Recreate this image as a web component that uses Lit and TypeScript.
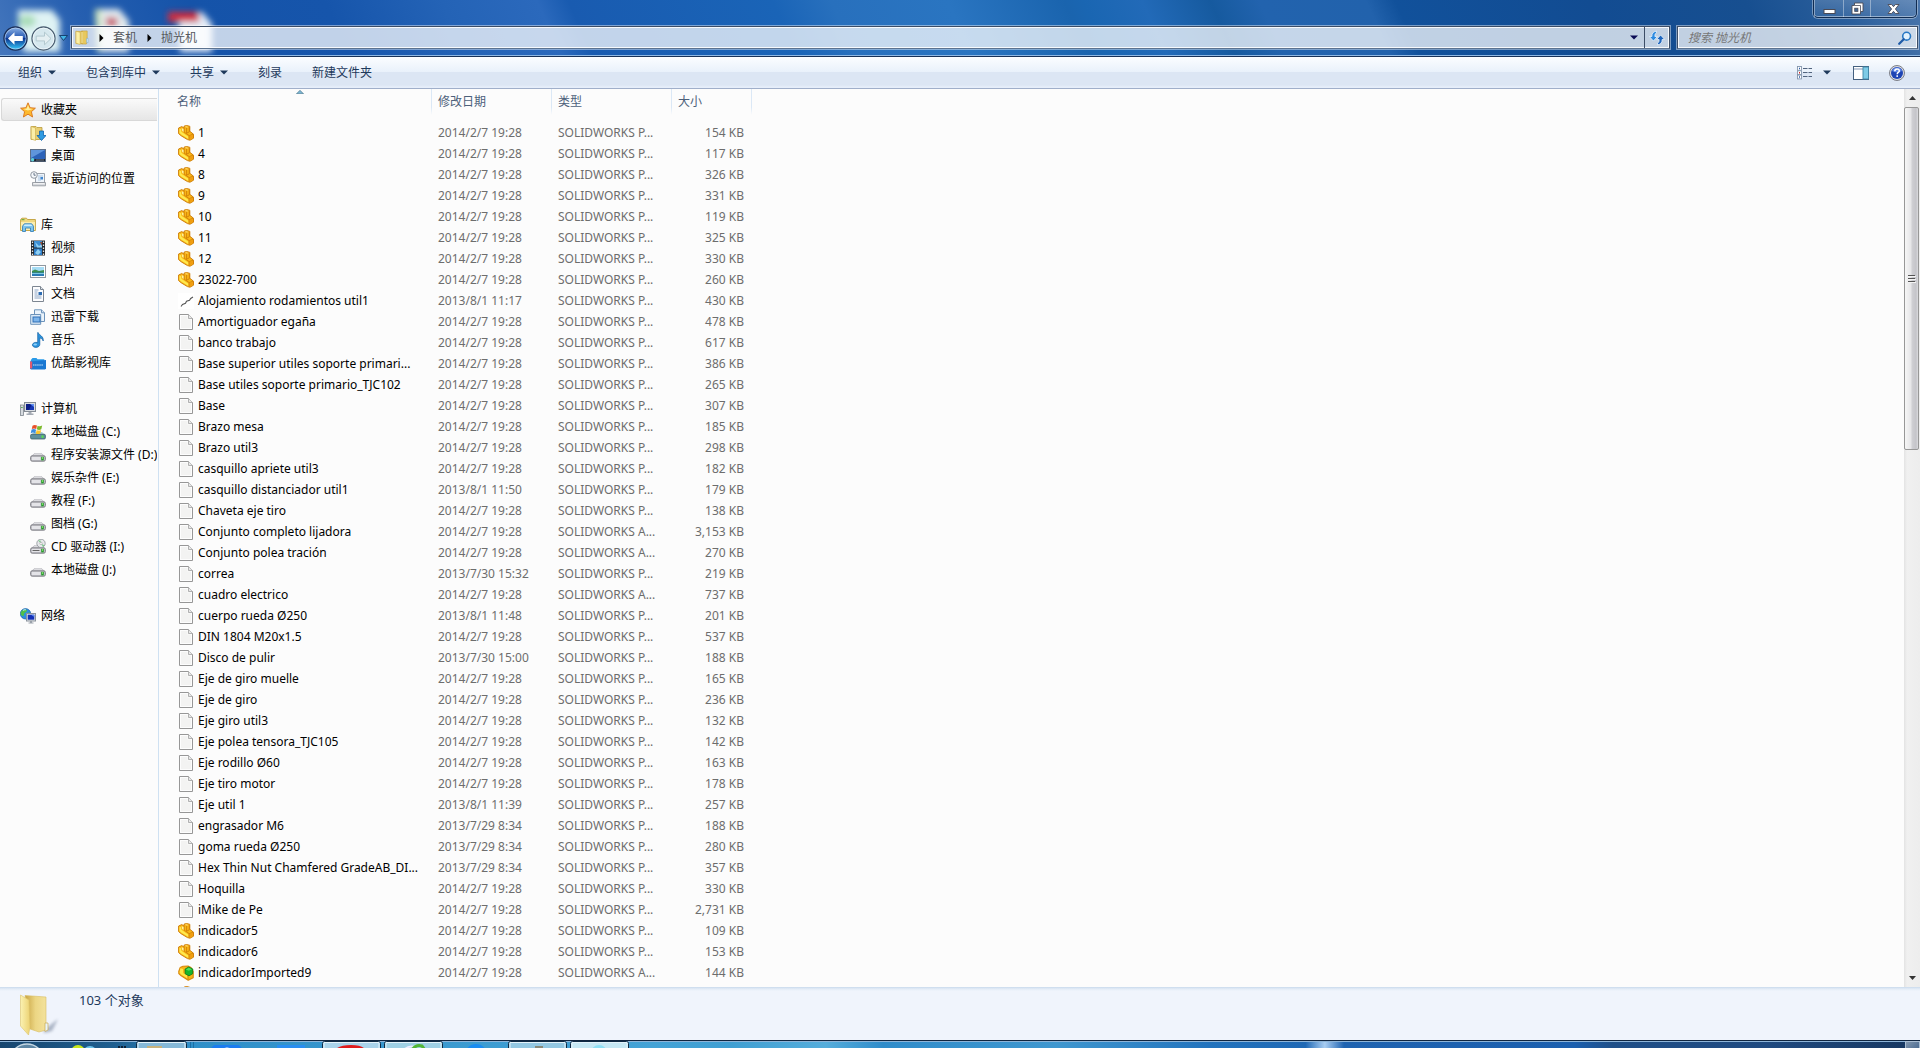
import { LitElement, html, css, svg, nothing } from "lit";
import { customElement } from "lit/decorators.js";

type Row = [kind: string, name: string, date: string, type: string, size: string];

const D = "2014/2/7 19:28";
const P = "SOLIDWORKS P...";
const A = "SOLIDWORKS A...";

const FILES: Row[] = [
  ["part", "1", D, P, "154"],
  ["part", "4", D, P, "117"],
  ["part", "8", D, P, "326"],
  ["part", "9", D, P, "331"],
  ["part", "10", D, P, "119"],
  ["part", "11", D, P, "325"],
  ["part", "12", D, P, "330"],
  ["part", "23022-700", D, P, "260"],
  ["sketch", "Alojamiento rodamientos util1", "2013/8/1 11:17", P, "430"],
  ["page", "Amortiguador egaña", D, P, "478"],
  ["page", "banco trabajo", D, P, "617"],
  ["page", "Base superior utiles soporte primari...", D, P, "386"],
  ["page", "Base utiles soporte primario_TJC102", D, P, "265"],
  ["page", "Base", D, P, "307"],
  ["page", "Brazo mesa", D, P, "185"],
  ["page", "Brazo util3", D, P, "298"],
  ["page", "casquillo apriete util3", D, P, "182"],
  ["page", "casquillo distanciador util1", "2013/8/1 11:50", P, "179"],
  ["page", "Chaveta eje tiro", D, P, "138"],
  ["page", "Conjunto completo lijadora", D, A, "3,153"],
  ["page", "Conjunto polea tración", D, A, "270"],
  ["page", "correa", "2013/7/30 15:32", P, "219"],
  ["page", "cuadro electrico", D, A, "737"],
  ["page", "cuerpo rueda Ø250", "2013/8/1 11:48", P, "201"],
  ["page", "DIN 1804 M20x1.5", D, P, "537"],
  ["page", "Disco de pulir", "2013/7/30 15:00", P, "188"],
  ["page", "Eje de giro muelle", D, P, "165"],
  ["page", "Eje de giro", D, P, "236"],
  ["page", "Eje giro util3", D, P, "132"],
  ["page", "Eje polea tensora_TJC105", D, P, "142"],
  ["page", "Eje rodillo Ø60", D, P, "163"],
  ["page", "Eje tiro motor", D, P, "178"],
  ["page", "Eje util 1", "2013/8/1 11:39", P, "257"],
  ["page", "engrasador M6", "2013/7/29 8:34", P, "188"],
  ["page", "goma rueda Ø250", "2013/7/29 8:34", P, "280"],
  ["page", "Hex Thin Nut Chamfered GradeAB_DI...", "2013/7/29 8:34", P, "357"],
  ["page", "Hoquilla", D, P, "330"],
  ["page", "iMike de Pe", D, P, "2,731"],
  ["part", "indicador5", D, P, "109"],
  ["part", "indicador6", D, P, "153"],
  ["asm", "indicadorImported9", D, A, "144"],
  ["part", "", "", "", ""],
];

const GROUPS: { icon: string; label: string; current?: boolean; items: [string, string][] }[] = [
  { icon: "star", label: "收藏夹", current: true, items: [["download", "下载"], ["desktop", "桌面"], ["recent", "最近访问的位置"]] },
  {
    icon: "library", label: "库",
    items: [["video", "视频"], ["picture", "图片"], ["document", "文档"], ["docs", "迅雷下载"], ["music", "音乐"], ["youku", "优酷影视库"]],
  },
  {
    icon: "computer", label: "计算机",
    items: [["system", "本地磁盘 (C:)"], ["drive", "程序安装源文件 (D:)"], ["drive", "娱乐杂件 (E:)"], ["drive", "教程 (F:)"], ["drive", "图档 (G:)"], ["cd", "CD 驱动器 (I:)"], ["drive", "本地磁盘 (J:)"]],
  },
  { icon: "network", label: "网络", items: [] },
];

const driveBody = svg`
  <path d="M1.5 9.5 4 6.8h8l2.5 2.7z" fill="#e9e9ec" stroke="#a9a9b0" stroke-width=".7"/>
  <rect x=".6" y="8.8" width="14.8" height="5.4" rx="1.6" fill="#c3c3c9" stroke="#77777e" stroke-width=".9"/>
  <rect x="2" y="10" width="8.5" height="3" fill="#e4e4e8"/>
  <rect x="11.2" y="9.8" width="2.6" height="3.6" fill="#2a9a2e"/><rect x="12" y="10.2" width="1" height="1.6" fill="#8af06a"/>`;

const ICONS: Record<string, unknown> = {
  part: svg`
    <path d="M.6 3 3.800 1.600 6 3V1.200L8.500.5l3.300.8v5l3.700 2.900v4L12 15.200l-2.500-.6L3.200 10.800.6 8.600z" fill="#f9b414" stroke="#d0800c" stroke-width="1" stroke-linejoin="round"/>
    <path d="M1.400 3.600 3 4.200l.4 2.600 6.800 4.800.2 2.400-6.600-4L1.400 8z" fill="#ffe94e"/>
    <path d="M3.600 3.200 5.800 4v3L4.200 6z" fill="#fff3a0"/>
    <path d="M6.800 1.800 8.400 1.400l2.200.5-1.800.7z" fill="#fff0a0"/>
    <path d="M8.600 2.800v5.400M11.300 2.200v4.600l-2.700 1.400M6.200 3v4.200l5 3.400M11.300 10.600l3.800-1.400M11.200 10.600v4" fill="none" stroke="#c87808" stroke-width=".8"/>
    <path d="m11.800 11.100 3-1.300v3l-3 1.500z" fill="#f09c10"/>`,
  asm: svg`
    <path d="M.8 6.200 2.200 2.400 5 1.200 10 1l3 1.400 2.200 4v6.400l-5 2.400L3.200 10.800.8 8.600z" fill="#f7b516" stroke="#d98a0e" stroke-width="1.100" stroke-linejoin="round"/>
    <path d="M2.400 3.200 5 4v4l4.200 2.600.8 3.200L3 9.400 1.600 7.600z" fill="#ffe646"/>
    <path d="M10 9v5.500" stroke="#c87808" stroke-width=".8"/>
    <path d="M7 4.200 10.600 2l4.200 2-.2 4.800-3.600 2-3.800-2z" fill="#16b52c" stroke="#087a18" stroke-width=".8"/>
    <path d="m7.800 4.400 3-1.600 3 1.400-3 1.600z" fill="#4fe05c"/>`,
  sketch: svg`<rect width="16" height="16" fill="#fff"/><path d="m3 13.500 1.500-2 3-1.200 1-2 3-1 1.200-1.800L15 4" fill="none" stroke="#555" stroke-width="1.100"/>`,
  page: svg`
    <path d="M1.500.5h9l4 4v11h-13z" fill="#fdfdfd" stroke="#979797"/>
    <path d="M3 2h6.500v3.500H13v8.500H3z" fill="#f3f3f2"/><path d="M10.500.5v4h4" fill="#e8e8e8" stroke="#9f9f9f" stroke-width=".8"/>`,
  star: svg`<path d="m8 .8 2.100 4.900 5.300.5-4 3.500 1.200 5.300L8 12.200 3.400 15l1.200-5.300-4-3.500 5.300-.5z" fill="#fdb92e" stroke="#d9731a" stroke-width=".9" stroke-linejoin="round"/><path d="m8 2.800 1.300 3.600 3.600.5L8 8.500 3.300 6.900l3.500-.5z" fill="#fff0a0"/>`,
  download: svg`
    <path d="M1 1.500h5l1 1h5v12H1z" fill="#e9cf72" stroke="#b99a3c" stroke-width=".8"/><path d="M1.200 1.500 5.500 3v12.500L1.200 14z" fill="#fbeea8" stroke="#c9ab4c" stroke-width=".6"/>
    <path d="M9.500 6h4v4.500H16l-4.500 5-4.500-5h2.500z" fill="#2f9be2" stroke="#0f62ac" stroke-width=".8"/>`,
  desktop: svg`<rect x=".5" y="1.500" width="15" height="12" fill="#2c62b8" stroke="#5e6f86"/><path d="M1 2h14L1 10z" fill="#5f95dc"/><rect x="1" y="11" width="14" height="2.300" fill="#1d2430"/><circle cx="2.600" cy="11.800" r="1.700" fill="#5fd0d8"/><rect x="6" y="11.500" width="8" height="1" fill="#6e7988"/>`,
  recent: svg`
    <path d="M5.500 2.500h9v9h-9z" fill="#eef4fa" stroke="#9aa1aa"/><path d="M8 5h5M8 7h3M8 9h3" stroke="#a9c4e0"/><rect x="10.500" y="6" width="2.500" height="2.500" fill="#3f86d0"/>
    <path d="M2.500 11.500h13v3.300h-13z" fill="#d4d7db" stroke="#8d9299" stroke-width=".8"/><path d="M3.500 12.600h11" stroke="#f4f5f6"/><circle cx="4" cy="4" r="3.300" fill="#f5f8fb" stroke="#9199a3"/><path d="M4 2v2.200h1.700" fill="none" stroke="#46576d" stroke-width=".8"/>`,
  library: svg`
    <path d="M.6 2.500 2 1.200h4.500l1 1.300h7.900v11H.6z" fill="#f0d880" stroke="#c19f3a" stroke-width=".9"/><path d="M1 5h14v8H1z" fill="#faedb0"/><path d="M1.500 2.700h3" stroke="#5aa63a"/>
    <path d="M2.500 14.500V9.200L4.300 6.800h7.400l1.800 2.400v5.300h-3V11h-5v3.500z" fill="#7cc4ee" stroke="#3c83b8" stroke-width=".9"/><path d="m3.600 9 1.200-1.400h6.400L12.400 9z" fill="#c8ecff"/>`,
  video: svg`
    <rect x="1" y=".5" width="14" height="15" fill="#22262b"/><rect x="4" y="1" width="8" height="6.500" fill="#3d8ed2"/><rect x="4" y="8.500" width="8" height="6.500" fill="#2f7fc8"/><path d="m5 2 4 4 3-2v3.500H7zM8 9l3 3-3 3-3-2z" fill="#8fd0f4"/><path d="m10 2 2 0v4z" fill="#9a4a32"/>
    <path d="M2.500 1.500v14M13.500 1.500v14" stroke="#e8e8e8" stroke-width="1.300" stroke-dasharray="1.500 1.500"/>`,
  picture: svg`<rect x=".5" y="2.500" width="15" height="12" fill="#fff" stroke="#8f979f"/><rect x="2" y="4" width="12" height="9" fill="#a6dcf5"/><path d="m2 8 3-1.500L9 8l5-1v3H2z" fill="#3d8f4e"/><path d="M2 9.500h12V13H2z" fill="#2a7ab5"/><path d="M2 10h12v1H2z" fill="#7cc8e0"/>`,
  document: svg`<path d="M2.500.5h8l3 3v12h-11z" fill="#fdfdfe" stroke="#7d8691"/><path d="M10.500.5v3h3" fill="#dfe5ec" stroke="#7d8691"/><path d="M4.500 4h4M4.500 6h3M4.500 8h3M4.500 10h7M4.500 12h7" stroke="#8ea6c4"/><rect x="8.500" y="6" width="3.500" height="3" fill="#2d6cb2"/>`,
  docs: svg`<path d="M4.500.8h7l3 3v8.700h-10z" fill="#eaf3fb" stroke="#6d93ba"/><path d="M11.500.8v3h3" fill="#cfe1f2" stroke="#6d93ba"/><path d="M.7 5.500h10v9.800h-10z" fill="#dcebf8" stroke="#6d93ba"/><rect x="3" y="8" width="7" height="5" fill="#7db4ea" stroke="#2f6fb5"/>`,
  music: svg`<path d="M8.200.6c.6 2.600 5.800 3.400 5 8.400-.6-2-2-2.800-3.400-3v6.400c0 1.800-1.800 3-3.900 3S2.200 14.200 2.400 12.800c.2-1.700 2.600-2.900 5.300-2.300V.6z" fill="#2b93dc" stroke="#1560a4" stroke-width=".7"/><ellipse cx="5.200" cy="12.400" rx="1.800" ry="1" fill="#8fd0fa"/>`,
  youku: svg`<path d="M.8 5 2.500 3h4l1 1.300h6.800V10H.8z" fill="#2a9ae8"/><path d="M0 6.500 16 5v8.500l-1 1H1l-1-1z" fill="#1b78d2"/><path d="M0 6.500h2.200v7H0z" fill="#e25a6e"/><path d="M3 10h10" stroke="#cfe6fb" stroke-dasharray="1.500 .6"/>`,
  computer: svg`
    <rect x=".5" y="4" width="3" height="10.500" fill="#d7dbe0" stroke="#7e858e" stroke-width=".8"/><rect x="1.200" y="6" width="1.400" height="1" fill="#3a9c3a"/><rect x="4.500" y="1.500" width="11" height="9" fill="#d9dde2" stroke="#858c95"/><rect x="6" y="3" width="8" height="6" fill="#1637b4"/><path d="M6 3h6l-3 6H6z" fill="#0b1d86"/><path d="M10 3h4v3z" fill="#5e8cf0"/><path d="M8.500 11h3v1.500h2V14h-7v-1.500h2z" fill="#a5abb4"/>`,
  system: svg`<path d="M.8 11 4 8h8l3.200 3z" fill="#a9cfd8"/><rect x=".6" y="10.300" width="14.800" height="4.700" rx="1.200" fill="#5d8f9c" stroke="#3d5f6b" stroke-width=".8"/><rect x="11.500" y="11.400" width="2" height="2.500" fill="#58e04a"/>
    <path d="M2.500 1.800C4 .6 5.500.8 7 1.600L6.200 5C4.800 4.300 3.300 4.200 1.800 5z" fill="#e8502a"/><path d="M7.600 1.800c1.500.8 3 .7 4.600-.2l-.9 3.700c-1.500.8-3 .8-4.500 0z" fill="#7dba2c"/><path d="M1.600 5.600c1.500-.8 3-.7 4.500.1l-.9 3.500c-1.500-.8-3-.8-4.500 0z" fill="#3b8de0"/><path d="M6.700 5.900c1.500.8 3 .8 4.500 0l-.9 3.600c-1.500.8-3 .7-4.500-.1z" fill="#fbc52c"/>`,
  drive: driveBody,
  cd: svg`${driveBody}<circle cx="11" cy="4.400" r="4.200" fill="#e6e8ea" stroke="#8b9096" stroke-width=".8"/><path d="M11 4.400 8 1.500h2.500zM11 4.400l3.600 2-1.600 1.500z" fill="#7fc98e"/><circle cx="11" cy="4.400" r="1.200" fill="#fff" stroke="#888" stroke-width=".5"/><path d="M2.500 11.500h7" stroke="#666"/>`,
  network: svg`<circle cx="5.500" cy="5.800" r="5.200" fill="#2e8fe0" stroke="#1c5fa8" stroke-width=".7"/><path d="M2 2.600C4 1 6.500 1.200 7 2.500S4 4.500 4 6.500 2 8.500 1 6.800 1 3.800 2 2.600zM8 4l2.300 1v2z" fill="#4fc04a"/><path d="M3 2.500c1-.8 2.500-1 3-.5" stroke="#d5f5ff" fill="none"/><rect x="6.500" y="5.500" width="9" height="7.500" fill="#dfe3e8" stroke="#8a929c"/><rect x="7.700" y="6.700" width="6.600" height="5" fill="#1532b8"/><path d="M11 6.700h3.300V9z" fill="#5b8af0"/><path d="M10 13h2v1.500h1.500v1h-5v-1H10z" fill="#9aa1aa"/>`,
  folder: svg`<path d="M1 1.500h7v13H1zM7 1h6v12l-1 2H7z" fill="#e8c85e" stroke="#c29c36" stroke-width=".6"/><path d="M1 1.200 5.500 2.500v13L1 14z" fill="#fdf0a4" stroke="#ccaa48" stroke-width=".6"/><path d="M7.500 2v12" stroke="#fff3b4"/><path d="M12.300 9h1.700v4.500h-1.700z" fill="#cfeaff" stroke="#7aa7c8" stroke-width=".5"/>`,
};

const icon = (name: string, size = 16) =>
  html`<svg class="icon" width=${size} height=${size} viewBox="0 0 16 16" aria-hidden="true">${ICONS[name]}</svg>`;

const downArrow = html`<svg class="icon" width="8" height="5" viewBox="0 0 8 5" aria-hidden="true"><path d="M0 .5h8L4 4.500z" fill="currentColor"/></svg>`;
const crumbArrow = html`<svg class="icon" width="5" height="8" viewBox="0 0 5 8" aria-hidden="true"><path d="M.5 0v8L4.500 4z" fill="#000"/></svg>`;

@customElement("app-root")
export class AppRoot extends LitElement {
  static styles = css`
    :host {
      display: flex;
      flex-direction: column;
      height: 100vh;
      overflow: hidden;
      background: #fcfcfc;
      font: 12px/20px "Noto Sans", "Noto Sans CJK SC", sans-serif;
      color: #000;
    }
    * { box-sizing: border-box; }
    button, input { font: inherit; color: inherit; border: 0; background: none; padding: 0; margin: 0; }
    a { color: inherit; text-decoration: none; }
    .icon { display: block; flex: none; }

    .glass {
      position: relative;
      flex: none;
      display: flex;
      align-items: flex-start;
      gap: 7px;
      height: 57px;
      padding: 26px 2px 0 3px;
      border-bottom: 1px solid #173158;
      box-shadow: inset 0 -1px #8fb8e4;
      background: linear-gradient(65deg, #4577bd 0%, #265fb0 5%, #1553a9 11%, #1655ab 18%, #2463b6 24%, #2b69bc 28.900%, #195bb0 30.500%, #1a64b7 41%, #2870bd 44%, #2a75c1 50%, #1a64ae 56%, #1a66b2 57%, #226ab8 60%, #165a9f 63.500%, #2263ae 66%, #2262ac 71.500%, #11519b 73%, #124c92 83%, #174f90 91%, #2b5f9c 96%, #4a76ac 100%);
    }
    .behind { position: absolute; left: 0; top: 0; }
    .nav { display: flex; align-items: center; position: relative; gap: 3px; height: 24px; }
    .nav-drop { width: 9px; height: 24px; display: grid; place-items: center; }
    .address, .search {
      position: relative;
      display: flex;
      align-items: center;
      height: 23px;
      border: 1px solid #3c4d66;
      border-bottom-color: #5c7390;
      box-shadow: 0 0 0 1px #ffffff70, inset 0 0 0 1px #ffffffd8;
      background: #ffffffbc;
      color: #55585c;
    }
    .address { flex: 1 1 auto; padding-left: 3px; margin-left: -4px; }
    .address .icon { margin-right: 9px; }
    .crumb { line-height: 20px; margin-right: 10px; }
    .crumb-end { margin-left: auto; display: flex; align-items: center; height: 21px; color: #0a0a55; }
    .crumb-end button { height: 21px; display: grid; place-items: center; }
    .crumb-end .icon { margin: 0; }
    .addr-drop { width: 20px; }
    .refresh { width: 25px; border-left: 1px solid #3c4d66; }
    .search { flex: 0 1 241px; padding: 0 5px 0 10px; }
    .search input { flex: 1; min-width: 0; height: 21px; outline: 0; }
    .search input::placeholder { color: #777; font-style: italic; opacity: 1; }

    .caption {
      position: absolute;
      right: 3px;
      top: 0;
      display: flex;
      height: 18px;
      border: 1px solid #102c52;
      border-top: 0;
      border-radius: 0 0 5px 5px;
      box-shadow: 0 0 0 1px #ffffff60, inset 0 -1px #ffffff70;
      background: linear-gradient(#ffffff28, #ffffff10);
    }
    .caption button { width: 27px; display: grid; place-items: center; border-left: 1px solid #ffffff60; }
    .caption .min { width: 29px; }
    .caption .close { width: 46px; }

    .toolbar {
      flex: none;
      display: flex;
      align-items: center;
      gap: 30px;
      height: 32px;
      padding: 0 15px 0 18px;
      border-bottom: 1px solid #a0afca;
      background: linear-gradient(#fbfdff 0, #e9f1fb 15px, #dce6f4 15px, #dce6f4 28px, #e6eefa 30px);
      color: #1e395b;
    }
    .toolbar button { display: flex; align-items: center; gap: 6px; height: 24px; white-space: nowrap; }
    .tools { margin-left: auto; display: flex; align-items: center; gap: 20px; }
    .tools .view { gap: 10px; margin-right: 2px; }

    .body { flex: 1; min-height: 0; display: flex; }
    .tree { flex: none; width: 159px; padding: 9px 1px 0 1px; border-right: 1px solid #cfe1f2; overflow: hidden; }
    .group { margin-bottom: 23px; }
    .node { display: flex; align-items: center; gap: 5px; height: 23px; padding-left: 29px; line-height: 23px; white-space: nowrap; overflow: hidden; }
    .node.root { padding-left: 19px; }
    .node.current {
      padding-left: 18px;
      border: 1px solid #d8d8d8;
      border-right: 0;
      border-radius: 3px 0 0 3px;
      line-height: 21px;
      background: linear-gradient(#fafafa, #e6e6e6);
    }

    .list { flex: 1; min-width: 0; overflow: hidden; }
    table { border-collapse: collapse; table-layout: fixed; width: 593px; }
    th {
      position: relative;
      height: 26px;
      padding: 0 0 0 6px;
      font-weight: 400;
      text-align: left;
      line-height: 26px;
      color: #4c607a;
      background: linear-gradient(#dbe8f6, #dbe8f6 70%, #fcfcfc) right / 1px 100% no-repeat;
    }
    .sort { position: absolute; left: 50%; top: 1px; }
    thead::after { content: ""; display: block; height: 7px; }
    .c-name { width: 273px; }
    .c-date, .c-type { width: 120px; }
    .c-size { width: 80px; }
    th.c-name { padding-left: 18px; }
    td { height: 21px; padding: 0 0 0 6px; white-space: nowrap; color: #6d6d6d; line-height: 21px; }
    .file { padding-left: 19px; color: #000; }
    .file-in { display: flex; align-items: center; gap: 4px; height: 21px; }
    .size { text-align: right; padding: 0 8px 0 0; }

    .scroll { flex: none; width: 16px; display: flex; flex-direction: column; background: linear-gradient(90deg, #e3e3e3, #f0f0f0 3px, #ededed); }
    .scroll button { flex: none; height: 18px; display: grid; place-items: center; }
    .thumb { flex: 342; margin: 0 1px 0 0; border: 1px solid #979797; border-radius: 2px; background: linear-gradient(90deg, #f6f6f6, #e6e6e8 45%, #cfcfd3 55%, #c4c4c9 85%, #dcdcdf); display: grid; place-items: center; }
    .rest { flex: 520; }

    .details { flex: none; display: flex; align-items: flex-start; gap: 18px; height: 53px; padding: 5px 18px 0; background: linear-gradient(#c9daec, #e3ecf7 2px, #f0f4fc 4px); color: #1e395b; }
    .count { font-size: 13px; line-height: 16px; }

    .taskbar {
      flex: none;
      position: relative;
      display: flex;
      height: 8px;
      overflow: hidden;
      border-top: 1px solid #10253f;
      box-shadow: inset 0 1px #8db4d8;
      background: linear-gradient(90deg, #17466f 0, #1f5f90 6%, #2f8fc8 10%, #44a3d6 34%, #3f9fd2 38%, #55addb 43%, #2f8cca 46%, #3f97cf 55%, #2273bd 63%, #1f68b4 68%, #a8cdf2 69%, #1f63b0 70%, #1b5fae 82%, #1f4f88 84%, #1f4a80 92%, #16365f 100%);
    }
    .task-art { display: block; flex: none; }
    .clock { margin: 4px 21px 0 auto; color: #fff; line-height: 16px; }
    .peek { width: 15px; height: 12px; border: 1px solid #a9bdd2; background: linear-gradient(135deg, #7f95ad, #43648c); }
  `;

  private header() {
    return html`
      <header class="glass">
        <svg class="behind" width="260" height="55" viewBox="0 0 260 55" aria-hidden="true">
          <defs>
            <filter id="soft" x="-20%" y="-20%" width="140%" height="140%"><feGaussianBlur stdDeviation="3"/></filter>
          </defs>
          <g filter="url(#soft)">
            <path d="M18 10h34l8 10v32H24l-6-20z" fill="#dff3f4"/><ellipse cx="27" cy="21" rx="9" ry="6" fill="#a9dcb8"/>
            <path d="M95 9h24l10 12v31H97z" fill="#e4ecef"/><path d="M95 9h6v42h-4z" fill="#c9e2b8"/><path d="M106 17l12 1-2 9h-9z" fill="#c85a6a"/>
            <path d="M178 12h24l10 12v28h-32z" fill="#e6eef8"/><path d="M168 12h31v10h-31z" fill="#d02c3c"/>
          </g>
        </svg>
        <nav class="nav" aria-label="导航">
          <button aria-label="后退">
            <svg class="icon" width="25" height="25" viewBox="0 0 25 25">
              <defs><linearGradient id="bk" x2="0" y2="1"><stop stop-color="#8fb4e6"/><stop offset=".45" stop-color="#2a5cb4"/><stop offset=".5" stop-color="#0b3490"/><stop offset="1" stop-color="#38d0ff"/></linearGradient></defs>
              <circle cx="12.500" cy="12.500" r="11.500" fill="url(#bk)" stroke="#1b2f58" stroke-width="1.400"/><circle cx="12.500" cy="12.500" r="10.500" fill="none" stroke="#bcd6f4" stroke-width=".7"/>
              <path d="m5 12.500 6.500-6.300v3.900h8.300v4.800h-8.300v3.900z" fill="#fff"/>
            </svg>
          </button>
          <button aria-label="前进" disabled>
            <svg class="icon" width="25" height="25" viewBox="0 0 25 25">
              <circle cx="12.500" cy="12.500" r="11.500" fill="#d3e4ec" fill-opacity=".75" stroke="#4c5f72" stroke-width="1.300"/><circle cx="12.500" cy="12.500" r="10.400" fill="none" stroke="#f2fafc" stroke-width=".8"/>
              <path d="m20 12.500-6.500-6.300v3.900H5.200v4.800h8.300v3.900z" fill="#e4eff2" stroke="#aec5cc" stroke-width=".9"/>
            </svg>
          </button>
          <button class="nav-drop" aria-label="最近的页面"><svg class="icon" width="9" height="6" viewBox="0 0 9 6"><path d="M.5.500h8l-4 5z" fill="#43b4e6" stroke="#123a66" stroke-width=".9"/></svg></button>
        </nav>
        <div class="address">
          ${icon("folder", 15)}${crumbArrow}
          <button class="crumb">套机</button>${crumbArrow}
          <button class="crumb">抛光机</button>
          <div class="crumb-end">
            <button class="addr-drop" aria-label="以前的位置">${downArrow}</button>
            <button class="refresh" aria-label="刷新">
              <svg class="icon" width="16" height="16" viewBox="0 0 16 16"><path d="M7.500 1.200C4 1.600 2.800 3.600 2.900 6.500H.4L4.400 11l4-4.500H5.900c-.1-2 .3-3 1.600-3.600z" fill="#2f8be0" stroke="#f4faff" stroke-width=".7"/><path d="M8.500 14.800c3.500-.4 4.700-2.400 4.600-5.300h2.500L11.600 5l-4 4.500h2.500c.1 2-.3 3-1.600 3.600z" fill="#1f66be" stroke="#f4faff" stroke-width=".7"/></svg>
            </button>
          </div>
        </div>
        <label class="search">
          <input type="text" placeholder="搜索 抛光机" aria-label="搜索" />
          <svg class="icon" width="14" height="14" viewBox="0 0 14 14" aria-hidden="true"><circle cx="8.600" cy="5.200" r="3.900" fill="#e3f2fd" stroke="#2878c4" stroke-width="1.600"/><path d="M5.700 8.200 1.200 12.800" stroke="#1d5aa8" stroke-width="2.200" stroke-linecap="round"/></svg>
        </label>
        <div class="caption">
          <button class="min" aria-label="最小化"><svg class="icon" width="13" height="13" viewBox="0 0 13 13"><rect x="1" y="7.500" width="11" height="4" fill="#fff" stroke="#4a4a55"/></svg></button>
          <button aria-label="还原"><svg class="icon" width="13" height="13" viewBox="0 0 13 13"><path d="M3.500 1h8.500v8.500H9.500V12H1V3.500h2.500z" fill="#fff" stroke="#4a4a55" stroke-width=".9"/><path d="M4 3.500h5.500v6" fill="none" stroke="#4a4a55" stroke-width=".8"/><rect x="3.700" y="6.200" width="3.200" height="3.200" fill="#3d6697" stroke="#4a4a55" stroke-width=".8"/></svg></button>
          <button class="close" aria-label="关闭"><svg class="icon" width="13" height="12" viewBox="0 0 13 12"><path d="M1 1.500h3.600l1.900 2.200 1.900-2.200H12L8.400 6l3.600 4.500H8.400L6.500 8.300l-1.900 2.200H1L4.600 6z" fill="#fff" stroke="#4a4a55" stroke-width=".9"/></svg></button>
        </div>
      </header>`;
  }

  private toolbar() {
    return html`
      <div class="toolbar" role="toolbar">
        <button>组织${downArrow}</button>
        <button>包含到库中${downArrow}</button>
        <button>共享${downArrow}</button>
        <button>刻录</button>
        <button>新建文件夹</button>
        <div class="tools">
          <button class="view" aria-label="更改视图">
            <svg class="icon" width="16" height="14" viewBox="0 0 16 14"><g fill="#fff" stroke="#8496ad" stroke-width=".9"><rect x=".5" y=".5" width="4" height="3.800"/><rect x=".5" y="4.800" width="4" height="3.800"/><rect x=".5" y="9.100" width="4" height="3.800"/></g><path d="M2 2.500h1" stroke="#2a5da8" stroke-width="1.400"/><path d="M2 6.700h1" stroke="#d02020" stroke-width="1.400"/><path d="M2 11h1" stroke="#2a5da8" stroke-width="1.400"/><path d="M6 2.500h4.500M11.500 2.500H15M6 6.500h4.500M11.500 6.500H15M6 10.500h4.500M11.500 10.500H15" stroke="#51647e"/></svg>
            ${downArrow}
          </button>
          <button aria-label="显示预览窗格">
            <svg class="icon" width="16" height="14" viewBox="0 0 16 14"><rect x=".5" y=".5" width="15" height="13" fill="#fff" stroke="#44607f"/><path d="M1 3h9" stroke="#8296b4"/><rect x="10" y="1" width="5.500" height="12" fill="#7ecbe6" stroke="#3f87a8" stroke-width=".9"/></svg>
          </button>
          <button aria-label="获取帮助">
            <svg class="icon" width="16" height="16" viewBox="0 0 16 16"><circle cx="8" cy="8" r="7.500" fill="#dcdde2" stroke="#70737c" stroke-width=".9"/><circle cx="8" cy="8" r="6" fill="#1e44b4"/><path d="M3 6a5.300 5.300 0 0 1 10 0c-3 1.800-7 1.800-10 0z" fill="#5f86e4"/><path d="M5.800 6.200c0-3 4.500-2.900 4.500-.3 0 1.600-2.100 1.500-2.100 3.300" fill="none" stroke="#fff" stroke-width="1.500"/><rect x="7.400" y="10.300" width="1.600" height="1.600" fill="#fff"/></svg>
          </button>
        </div>
      </div>`;
  }

  private tree() {
    return html`
      <nav class="tree" aria-label="导航窗格">
        ${GROUPS.map((g) => html`
          <div class="group">
            <a class="node root ${g.current ? "current" : ""}" href="#">${icon(g.icon)}${g.label}</a>
            ${g.items.map(([ic, label]) => html`<a class="node" href="#">${icon(ic)}${label}</a>`)}
          </div>`)}
      </nav>`;
  }

  private list() {
    return html`
      <main class="list">
        <table>
          <thead>
            <tr>
              <th class="c-name">名称<svg class="sort" width="8" height="4" viewBox="0 0 8 4" aria-hidden="true"><path d="M.5 3.800 4 .3l3.500 3.500z" fill="#7db8d4" stroke="#39647c" stroke-width=".6"/></svg></th>
              <th class="c-date">修改日期</th>
              <th class="c-type">类型</th>
              <th class="c-size">大小</th>
            </tr>
          </thead>
          <tbody>
            ${FILES.map(([kind, name, date, type, size]) => html`
              <tr>
                <td class="file"><div class="file-in">${icon(kind)}${name}</div></td>
                <td>${date}</td>
                <td>${type}</td>
                <td class="size">${size ? `${size} KB` : nothing}</td>
              </tr>`)}
          </tbody>
        </table>
      </main>
      <div class="scroll">
        <button aria-label="向上滚动"><svg class="icon" width="7" height="4" viewBox="0 0 7 4"><path d="M0 4h7L3.500 0z" fill="#333"/></svg></button>
        <div class="thumb"><svg class="icon" width="8" height="9" viewBox="0 0 8 9"><path d="M0 1.500h7M0 4.500h7M0 7.500h7" stroke="#555"/><path d="M0 2.500h8M0 5.500h8M0 8.500h8" stroke="#f4f4f4"/></svg></div>
        <div class="rest"></div>
        <button aria-label="向下滚动"><svg class="icon" width="7" height="4" viewBox="0 0 7 4"><path d="M0 0h7L3.500 4z" fill="#333"/></svg></button>
      </div>`;
  }

  private footer() {
    return html`
      <footer class="details">
        <svg class="icon" width="43" height="44" viewBox="0 0 43 44" aria-hidden="true">
          <defs>
            <linearGradient id="f1"><stop stop-color="#fbf2b2"/><stop offset="1" stop-color="#ecd273"/></linearGradient>
            <linearGradient id="f2"><stop stop-color="#c9a544"/><stop offset=".5" stop-color="#ecd684"/><stop offset="1" stop-color="#f3e29c"/></linearGradient>
            <filter id="sh"><feGaussianBlur stdDeviation="1.500"/></filter>
          </defs>
          <path d="M26 38 40 27l-6 12-8 2z" fill="#8d99ad" opacity=".7" filter="url(#sh)"/>
          <path d="M7 3.500 28 5v33l-7 2-9-3z" fill="url(#f2)" stroke="#d8bd62" stroke-width=".6"/>
          <path d="M27 31h3v7l-3 1.500z" fill="#e9f4fb" stroke="#c9aa50" stroke-width=".7"/>
          <path d="M2.500 3 11 8l1 27-1.500 8-8-9z" fill="url(#f1)" stroke="#dcc26a" stroke-width=".6"/>
        </svg>
        <span class="count">103 个对象</span>
      </footer>
      <div class="taskbar">
        <svg class="task-art" width="640" height="8" viewBox="0 0 640 8" aria-hidden="true">
          <circle cx="27" cy="20" r="17" fill="#5d86a4" stroke="#c3d6e2" stroke-width="1.500"/>
          <circle cx="78" cy="11" r="7" fill="#c8e81c"/><circle cx="90" cy="12" r="7" fill="#6cc4ee"/>
          <path d="M118 6h8" stroke="#0b1f36" stroke-width="2" stroke-dasharray="2 1"/>
          <g stroke="#0e2a44"><rect x="136.500" y=".5" width="50" height="12" rx="2" fill="#86b9d8"/><path d="M190.500 1v8M193.500 1v8" stroke="#1c6fa6"/>
            <rect x="322.500" y=".5" width="58" height="12" rx="2" fill="#a9d3ea"/><rect x="384.500" y=".5" width="58" height="12" rx="2" fill="#9fd0e4"/>
            <rect x="508.500" y=".5" width="58" height="12" rx="2" fill="#94c8e2"/><rect x="570.500" y=".5" width="58" height="12" rx="2" fill="#c6e8f4"/></g>
          <g fill="none" stroke="#e4f3fb"><path d="M138 8V1.500h47V8M324 8V1.500h55V8M386 8V1.500h55V8M510 8V1.500h55V8M572 8V1.500h55V8"/></g>
          <rect x="147" y="5" width="15" height="6" fill="#c8b27c"/>
          <rect x="211" y="4" width="31" height="12" rx="5" fill="#1c7cf0"/><path d="M221 9q6-5 12 0z" fill="#fff"/>
          <rect x="277" y="4" width="28" height="8" fill="#2a8ef0"/>
          <path d="M334 10q4-6 17-6t15 6z" fill="#e01c1c"/>
          <path d="M404 9q4-5 12-3" fill="none" stroke="#eef" stroke-width="2"/><path d="M412 9q4-6 10-4l3 4" fill="none" stroke="#52b636" stroke-width="3"/>
          <circle cx="476" cy="14" r="11" fill="#1a8cf0"/><path d="M532 8h12M535 6h8" stroke="#8a8a7a" stroke-width="2"/><circle cx="599" cy="12" r="8" fill="#8fe0f4"/><circle cx="599" cy="10" r="3" fill="#1b5f72"/>
        </svg>
        <span class="clock">14:22</span>
        <button class="peek" aria-label="显示桌面"></button>
      </div>`;
  }

  render() {
    return html`${this.header()}${this.toolbar()}<div class="body">${this.tree()}${this.list()}</div>${this.footer()}`;
  }
}
